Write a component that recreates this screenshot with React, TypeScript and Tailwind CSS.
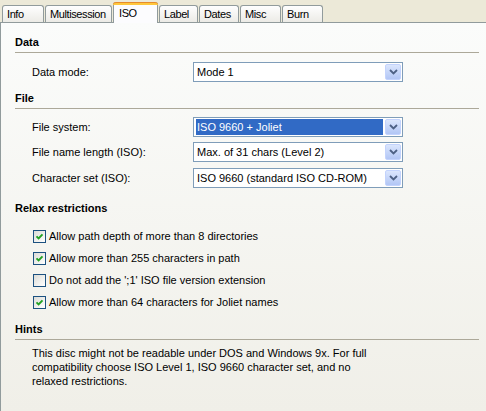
import React from "react";

const tabs = [
  { label: "Info", w: "w-[42px]" },
  { label: "Multisession", w: "w-[67px]" },
  { label: "ISO", w: "w-[45px]", active: true },
  { label: "Label", w: "w-[39px]" },
  { label: "Dates", w: "w-[40px]" },
  { label: "Misc", w: "w-[41px]" },
  { label: "Burn", w: "w-[41px]" },
];

function Chevron() {
  return (
    <svg width="9" height="6" viewBox="0 0 9 6">
      <path d="M1 1 L4.5 4.5 L8 1" fill="none" stroke="#4d6185" strokeWidth="1.8" />
    </svg>
  );
}

function Combo({ value, selected }: { value: string; selected?: boolean }) {
  return (
    <div className="flex h-[20px] w-[210px] items-stretch border border-[#7f9db9] bg-white p-[1px]">
      <div className="flex flex-1 items-stretch pl-[1px] pr-[2px]">
        <span
          className={
            selected
              ? "flex flex-1 items-center bg-[#316ac5] pl-[1px] text-white"
              : "flex flex-1 items-center pl-[1px] text-black"
          }
        >
          {value}
        </span>
      </div>
      <div className="flex w-[16px] items-center justify-center rounded-[2px] border border-[#c3d3fd] bg-linear-to-b from-[#dbe6fd] to-[#b2c6f5]">
        <Chevron />
      </div>
    </div>
  );
}

function Check({ checked }: { checked?: boolean }) {
  return (
    <div className="flex h-[13px] w-[13px] items-center justify-center border border-[#1c5180] bg-linear-to-br from-[#dcdcd7] to-white">
      {checked && (
        <svg width="9" height="9" viewBox="0 0 9 9">
          <path d="M1.5 4.3 L3.6 6.4 L7.5 2.3" fill="none" stroke="#21a121" strokeWidth="1.9" />
        </svg>
      )}
    </div>
  );
}

function Heading({ text, line = true, className = "" }: { text: string; line?: boolean; className?: string }) {
  return (
    <div
      className={
        "w-[464px] font-bold leading-[13px] " +
        (line ? "border-b border-[#aca899] pb-[3px] " : "") +
        className
      }
    >
      {text}
    </div>
  );
}

function Row({ label, value, selected, className = "" }: { label: string; value: string; selected?: boolean; className?: string }) {
  return (
    <div className={"flex items-center pl-[17px] " + className}>
      <div className="w-[161px]">{label}</div>
      <Combo value={value} selected={selected} />
    </div>
  );
}

const options = [
  { text: "Allow path depth of more than 8 directories", checked: true },
  { text: "Allow more than 255 characters in path", checked: true },
  { text: "Do not add the ';1' ISO file version extension", checked: false },
  { text: "Allow more than 64 characters for Joliet names", checked: true },
];

export default function App() {
  return (
    <div className="flex h-[411px] w-[486px] flex-col overflow-hidden bg-[#ece9d8] font-['Liberation_Sans',Arial,sans-serif] text-[11px] text-black">
      {/* Tab strip */}
      <div className="flex h-[22px] items-end pl-[2px] tracking-[-0.4px]">
        {tabs.map((t, i) =>
          t.active ? (
            <div
              key={t.label}
              className={"relative z-10 -mb-[1px] ml-[1px] flex h-[21px] flex-col rounded-t-[3px] border-x border-[#919b9c] bg-[#fcfcfe] " + t.w}
            >
              <div className="-mx-[1px] h-[3px] rounded-t-[3px] border-t border-[#e68b2c] bg-[#ffc73c]" />
              <div className="pl-[5px] pt-[2px] leading-[13px]">{t.label}</div>
            </div>
          ) : (
            <div
              key={t.label}
              className={
                "flex h-[17px] items-center overflow-hidden whitespace-nowrap rounded-t-[3px] border-x border-t border-[#919b9c] bg-linear-to-b from-[#fefefe] to-[#ecebe6] pl-[4px] " +
                (i > 0 ? "ml-[1px] " : "") +
                t.w
              }
            >
              {t.label}
            </div>
          )
        )}
      </div>

      {/* Panel */}
      <div className="flex-1 border-l border-t border-[#919b9c] bg-linear-to-b from-[#fbfcfb] to-[#f0efe8] pl-[14px]">
        <Heading text="Data" className="mt-[13px]" />
        <Row label="Data mode:" value="Mode 1" className="mt-[9px]" />

        <Heading text="File" className="mt-[10px]" />
        <Row label="File system:" value="ISO 9660 + Joliet" selected className="mt-[8px]" />
        <Row label="File name length (ISO):" value="Max. of 31 chars (Level 2)" className="mt-[5px]" />
        <Row label="Character set (ISO):" value="ISO 9660 (standard ISO CD-ROM)" className="mt-[6px]" />

        <Heading text="Relax restrictions" line={false} className="mt-[14px]" />
        <div className="mt-[10px] flex flex-col">
          {options.map((o) => (
            <div key={o.text} className="flex h-[22px] items-center gap-[3px] pl-[18px]">
              <Check checked={o.checked} />
              <span>{o.text}</span>
            </div>
          ))}
        </div>

        <Heading text="Hints" className="mt-[10px]" />
        <p className="mt-[6px] pl-[17px] leading-[14px]">
          This disc might not be readable under DOS and Windows 9x. For full
          <br />
          compatibility choose ISO Level 1, ISO 9660 character set, and no
          <br />
          relaxed restrictions.
        </p>
      </div>
    </div>
  );
}
